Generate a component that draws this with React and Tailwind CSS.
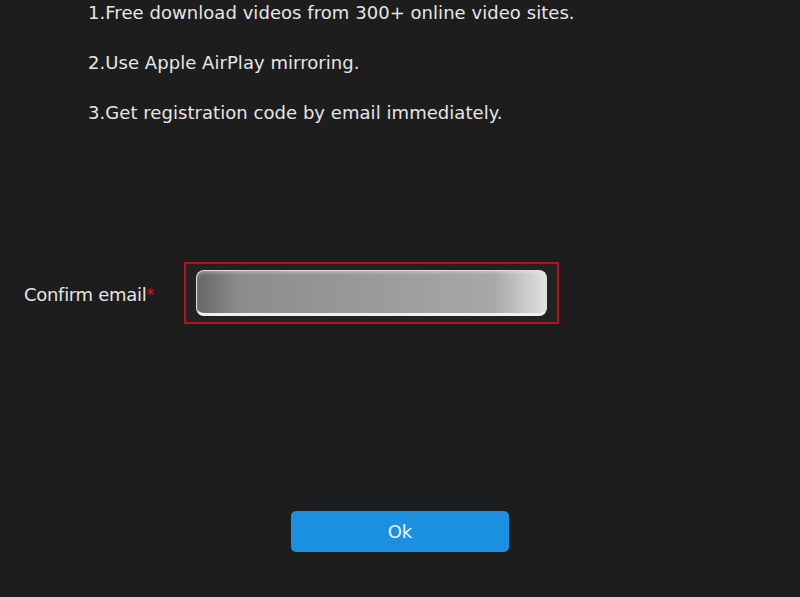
export default function App() {
  const font = { fontFamily: '"DejaVu Sans", "Liberation Sans", sans-serif' };
  return (
    <div className="w-[800px] h-[597px] bg-[#1d1d1d] overflow-hidden flex flex-col text-[#e6e6e6]" style={font}>
      <div className="pl-[88px] pt-[2px] flex flex-col gap-[28px] text-[18px] leading-[22px] tracking-[0.05px]">
        <div>1.Free download videos from 300+ online video sites.</div>
        <div>2.Use Apple AirPlay mirroring.</div>
        <div>3.Get registration code by email immediately.</div>
      </div>
      <div className="mt-[138px] flex items-center">
        <div className="w-[184px] pl-[24px] pt-[4px] text-[18px] leading-[22px] text-[#e6e6e6] tracking-[-0.3px]">
          Confirm email<span className="text-[#d0202a] align-top text-[15px]">*</span>
        </div>
        <div className="w-[375px] h-[62px] border-[2px] border-[#b0141c] bg-[#222] flex items-center justify-center px-[10px]">
          <div className="w-full h-[46px] rounded-[8px] border border-[#ddd] border-b-[3px] border-b-[#f0f0f0] shadow-[inset_0_2px_3px_rgba(255,255,255,0.3)] bg-[linear-gradient(90deg,#666_0%,#8c8c8c_12%,#9a9a9a_50%,#a8a8a8_85%,#e0e0e0_100%)]"></div>
        </div>
      </div>
      <div className="mt-[187px] flex justify-center">
        <button className="w-[218px] h-[41px] rounded-[5px] bg-[#1b8fe0] text-[#e8f4ff] text-[18px]" style={font}>Ok</button>
      </div>
    </div>
  );
}
